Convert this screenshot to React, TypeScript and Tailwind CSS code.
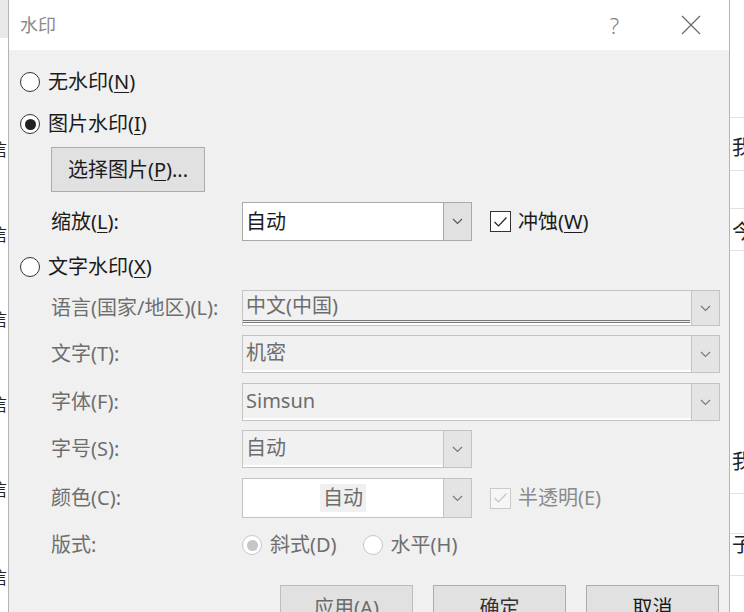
import React from "react";

const FONT = { fontFamily: '"Noto Sans", "Noto Sans CJK SC", sans-serif' };

const Chevron = ({ color = "#555" }: { color?: string }) => (
  <svg width="11" height="7" viewBox="0 0 11 7" fill="none">
    <path d="M1 1l4.5 4.5L10 1" stroke={color} strokeWidth="1.1" />
  </svg>
);

const Radio = ({ checked, disabled }: { checked?: boolean; disabled?: boolean }) => (
  <div
    className={`flex h-[20px] w-[20px] shrink-0 items-center justify-center rounded-full border ${
      disabled ? "border-[#c6c6c6] bg-white" : "border-[#333] bg-white"
    }`}
  >
    {checked && (
      <div className={`h-[11px] w-[11px] rounded-full ${disabled ? "bg-[#c6c6c6]" : "bg-[#222]"}`} />
    )}
  </div>
);

const Check = ({ disabled }: { disabled?: boolean }) => (
  <div
    className={`flex h-[21px] w-[21px] shrink-0 items-center justify-center border ${
      disabled ? "border-[#cacaca] bg-[#f6f6f6]" : "border-[#333] bg-white"
    }`}
  >
    <svg width="15" height="12" viewBox="0 0 15 12" fill="none">
      <path d="M1.5 6l4 4L13.5 1.5" stroke={disabled ? "#c4c4c4" : "#222"} strokeWidth="1.2" />
    </svg>
  </div>
);

interface ComboProps {
  value: string;
  width: string;
  disabled?: boolean;
  white?: boolean;
  center?: boolean;
  underline?: boolean;
}

const Combo = ({ value, width, disabled, white, center, underline }: ComboProps) => (
  <div
    className={`flex h-full ${width} border ${disabled ? "border-[#c3c3c3]" : "border-[#a9a9a9]"} ${
      white ? "bg-white" : disabled ? "bg-[#f1f1f1]" : "bg-white"
    }`}
  >
    <div className={`flex flex-1 flex-col ${disabled && !white ? "border-b-2 border-white" : ""}`}>
      <div
        className={`flex flex-1 items-center ${center ? "justify-center" : "pl-[3px]"} ${
          underline ? "mr-[1px] border-b-[3px] border-double border-[#777]" : ""
        }`}
      >
        <span
          className={`text-[20px] leading-none ${disabled ? "text-[#6d6d6d]" : "text-[#1b1b1b]"} ${
            center ? "bg-[#f0f0f0] px-[3px] py-[4px]" : ""
          }`}
        >
          {value}
        </span>
      </div>
    </div>
    <div
      className={`flex w-[28px] items-center justify-center border-l ${
        disabled ? "border-[#c3c3c3] bg-[#e4e4e4]" : "border-[#a9a9a9] bg-[#e1e1e1]"
      }`}
    >
      <Chevron color={disabled ? "#777" : "#555"} />
    </div>
  </div>
);

const Label = ({ children, disabled }: { children: React.ReactNode; disabled?: boolean }) => (
  <div className={`w-[191px] shrink-0 text-[20px] ${disabled ? "text-[#6e6e6e]" : "text-[#1b1b1b]"}`}>
    {children}
  </div>
);

const U = ({ children }: { children: React.ReactNode }) => (
  <span className="underline decoration-1 underline-offset-[3px]">{children}</span>
);

const leftChars = [150, 235, 320, 405, 490, 578];
const rightChars: [number, string][] = [
  [148, "我"],
  [232, "今"],
  [462, "我"],
  [545, "子"],
];
const rightLines = [117, 170, 208, 250, 493, 533, 575];

export default function App() {
  return (
    <div className="flex h-[612px] w-[744px] overflow-hidden bg-white" style={FONT}>
      {/* document behind, left */}
      <div className="relative w-[8px] shrink-0 overflow-hidden bg-white">
        <div className="h-[38px] bg-[#e9e9e9]" />
        {leftChars.map((y) => (
          <span
            key={y}
            className="absolute left-[-10px] text-[17px] leading-none text-[#222]"
            style={{ top: y - 9 }}
          >
            信
          </span>
        ))}
      </div>

      {/* dialog */}
      <div className="flex w-[722px] shrink-0 flex-col border-x border-[#b4b4b4] bg-[#f0f0f0]">
        <div className="flex h-[50px] shrink-0 items-center bg-white pl-[11px]">
          <span className="text-[18px] text-[#8a8a8a]">水印</span>
          <span className="ml-auto text-[22px] font-light text-[#808080]">?</span>
          <div className="ml-[62px] mr-[28px] flex items-center">
            <svg width="20" height="20" viewBox="0 0 20 20" fill="none">
              <path d="M1 1l18 18M19 1L1 19" stroke="#666" strokeWidth="1.1" />
            </svg>
          </div>
        </div>

        <div className="flex flex-col">
          <div className="mt-[14px] flex h-[36px] items-center gap-[8px] pl-[11px] text-[20px] text-[#1b1b1b]">
            <Radio />
            <span>
              无水印(<U>N</U>)
            </span>
          </div>
          <div className="mt-[6px] flex h-[36px] items-center gap-[8px] pl-[11px] text-[20px] text-[#1b1b1b]">
            <Radio checked />
            <span>
              图片水印(<U>I</U>)
            </span>
          </div>
          <div className="mt-[5px] flex h-[45px] pl-[42px]">
            <button className="flex h-full w-[154px] items-center justify-center border border-[#adadad] bg-[#e1e1e1] text-[20px] text-[#1b1b1b]">
              选择图片(<U>P</U>)...
            </button>
          </div>
          <div className="mt-[10px] flex h-[39px] items-center pl-[42px]">
            <Label>
              缩放(<U>L</U>):
            </Label>
            <Combo value="自动" width="w-[230px]" />
            <div className="ml-[18px] flex items-center gap-[7px] text-[20px] text-[#1b1b1b]">
              <Check />
              <span>
                冲蚀(<U>W</U>)
              </span>
            </div>
          </div>
          <div className="mt-[8px] flex h-[36px] items-center gap-[8px] pl-[11px] text-[20px] text-[#1b1b1b]">
            <Radio />
            <span>
              文字水印(<U>X</U>)
            </span>
          </div>
          <div className="mt-[5px] flex h-[36px] items-center pl-[42px]">
            <Label disabled>语言(国家/地区)(L):</Label>
            <Combo value="中文(中国)" width="w-[478px]" disabled underline />
          </div>
          <div className="mt-[9px] flex h-[38px] items-center pl-[42px]">
            <Label disabled>文字(T):</Label>
            <Combo value="机密" width="w-[478px]" disabled />
          </div>
          <div className="mt-[10px] flex h-[38px] items-center pl-[42px]">
            <Label disabled>字体(F):</Label>
            <Combo value="Simsun" width="w-[478px]" disabled />
          </div>
          <div className="mt-[9px] flex h-[38px] items-center pl-[42px]">
            <Label disabled>字号(S):</Label>
            <Combo value="自动" width="w-[230px]" disabled />
          </div>
          <div className="mt-[10px] flex h-[40px] items-center pl-[42px]">
            <Label disabled>颜色(C):</Label>
            <Combo value="自动" width="w-[230px]" disabled white center />
            <div className="ml-[18px] flex items-center gap-[7px] text-[20px] text-[#8a8a8a]">
              <Check disabled />
              <span>半透明(E)</span>
            </div>
          </div>
          <div className="mt-[9px] flex h-[36px] items-center pl-[42px] text-[20px] text-[#6e6e6e]">
            <Label disabled>版式:</Label>
            <div className="flex items-center gap-[8px]">
              <Radio checked disabled />
              <span>斜式(D)</span>
            </div>
            <div className="ml-[26px] flex items-center gap-[8px]">
              <Radio disabled />
              <span>水平(H)</span>
            </div>
          </div>
          <div className="mt-[22px] flex h-[46px] justify-end gap-[20px] pr-[10px]">
            <button className="flex w-[133px] items-center justify-center border border-[#bcbcbc] bg-[#e1e1e1] text-[20px] text-[#6a6a6a]">
              应用(A)
            </button>
            <button className="flex w-[133px] items-center justify-center border border-[#adadad] bg-[#e1e1e1] text-[20px] text-[#333]">
              确定
            </button>
            <button className="flex w-[133px] items-center justify-center border border-[#adadad] bg-[#e1e1e1] text-[20px] text-[#1b1b1b]">
              取消
            </button>
          </div>
        </div>
      </div>

      {/* document behind, right */}
      <div className="relative flex-1 overflow-hidden bg-white">
        {rightLines.map((y) => (
          <div key={y} className="absolute left-0 right-0 h-px bg-[#e2e2e2]" style={{ top: y }} />
        ))}
        {rightChars.map(([y, c]) => (
          <span
            key={y}
            className="absolute left-[2px] text-[20px] leading-none text-[#222]"
            style={{ top: y - 10 }}
          >
            {c}
          </span>
        ))}
      </div>
    </div>
  );
}
